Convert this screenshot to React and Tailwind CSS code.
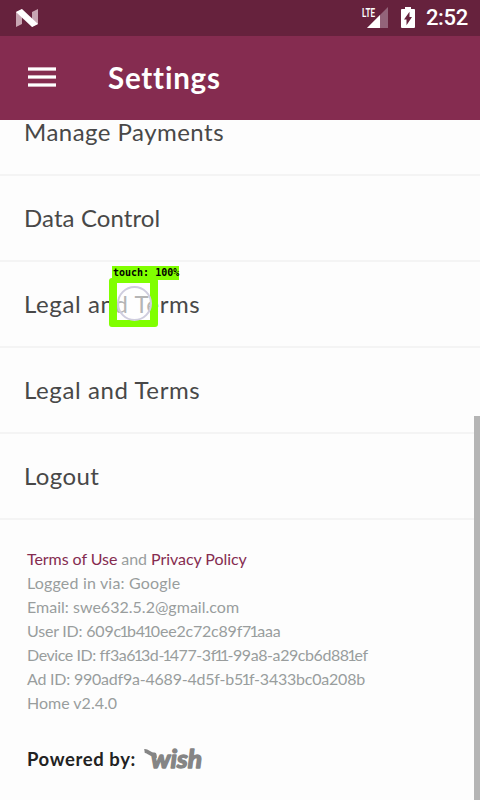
import { Fragment } from "react";

const menuItems = [
  { label: "Manage Payments", tracking: "tracking-[0.47px]" },
  { label: "Data Control", tracking: "tracking-[0.1px]" },
  { label: "Legal and Terms", tracking: "tracking-[0.6px]" },
  { label: "Legal and Terms", tracking: "tracking-[0.6px]" },
  { label: "Logout", tracking: "tracking-[0.4px]" },
];

const details = [
  { text: "Logged in via: Google", tracking: "tracking-[0.18px]" },
  { text: "Email: swe632.5.2@gmail.com", tracking: "tracking-[0.02px]" },
  { text: "User ID: 609c1b410ee2c72c89f71aaa", tracking: "tracking-[-0.2px]" },
  { text: "Device ID: ff3a613d-1477-3f11-99a8-a29cb6d881ef", tracking: "tracking-[-0.42px]" },
  { text: "Ad ID: 990adf9a-4689-4d5f-b51f-3433bc0a208b", tracking: "tracking-[-0.22px]" },
  { text: "Home v2.4.0", tracking: "tracking-[0px]" },
];

// Tightens the space round each digit one, which is set tabular by default.
function NarrowOnes({ text }) {
  return text.split("1").map((part, i) => (
    <Fragment key={i}>
      {i > 0 && <span className="-mx-[1.55px]">1</span>}
      {part}
    </Fragment>
  ));
}

function StatusBar() {
  return (
    <div className="flex h-9 shrink-0 items-center bg-[#66223d] pl-4 pr-3 text-white">
      <svg width="22" height="18" viewBox="0 0 22 18">
        <path d="M0 3L6 0V15L0 18Z" fill="#c7a5b2" />
        <path d="M16 3L22 0V15L16 18Z" fill="#c7a5b2" />
        <path d="M0 3L6 0L22 15L16 18Z" fill="#fff" />
      </svg>
      <svg className="ml-auto overflow-visible" width="28" height="24" viewBox="0 0 28 24">
        <path d="M6 22L27 1V22Z" fill="#93647a" />
        <path d="M0 0H14.5V12H0Z" fill="#66223d" />
        <path d="M6 22L19 9V22Z" fill="#fff" />
        <text x="1" y="11" fill="#fff" fontFamily="Roboto, sans-serif" fontWeight="600" fontSize="13.5" textLength="13" lengthAdjust="spacingAndGlyphs">LTE</text>
      </svg>
      <svg className="-mt-[2px] ml-3 mr-[11px]" width="14" height="21" viewBox="0 0 14 22" preserveAspectRatio="none">
        <path d="M4 0H10V2H13Q14 2 14 3V21Q14 22 13 22H1Q0 22 0 21V3Q0 2 1 2H4Z" fill="#fff" />
        <path d="M8.5 5V10.5H11L5.5 19V13H3Z" fill="#66223d" />
      </svg>
      <span className="font-[Roboto,sans-serif] text-[22px] font-medium leading-9 tracking-[-0.3px]">2:52</span>
    </div>
  );
}

function TouchMarker() {
  return (
    <div className="absolute left-[109px] top-[4px]">
      <div className="ml-[3px] h-[14px] w-[67px] whitespace-nowrap bg-[#80ff00] pl-px font-['DejaVu_Sans_Mono','Liberation_Mono',monospace] text-[10px] font-bold leading-[13px] text-black">touch: 100%</div>
      <div className="-mt-[2px] flex h-[49px] w-[49px] items-center justify-center rounded-[3px] border-x-8 border-b-[7px] border-t-[5px] border-[#80ff00] bg-white/60 pl-[2px] pt-[3px]">
        <div className="h-[35px] w-[35px] shrink-0 rounded-full border-2 border-[#cfcdde]" />
      </div>
    </div>
  );
}

function WishLogo() {
  return (
    <svg className="ml-2 overflow-visible" width="60" height="22" viewBox="0 0 60 22" role="img">
      <path d="M0.5 3C4 2.5 6 7 10.5 6.5L11 10" fill="none" stroke="#858585" strokeWidth="4" strokeLinejoin="round" />
      <text x="7" y="19.5" fill="#858585" stroke="#858585" strokeWidth="1.4" strokeLinejoin="round" fontFamily="Lato, sans-serif" fontWeight="700" fontStyle="italic" fontSize="25.5" textLength="51" lengthAdjust="spacingAndGlyphs">wish</text>
    </svg>
  );
}

export default function App() {
  return (
    <div className="relative flex h-[800px] w-[480px] flex-col overflow-hidden bg-[#fdfdfd] font-[Lato,sans-serif]">
      <StatusBar />
      <header className="z-10 flex h-[84px] shrink-0 items-center bg-[#852c50] pl-7">
        <div className="-mt-[2px] flex w-7 flex-col gap-1">
          <i className="h-1 border-y border-[#d3b0be] bg-white" />
          <i className="h-1 border-y border-[#d3b0be] bg-white" />
          <i className="h-1 border-y border-[#d3b0be] bg-white" />
        </div>
        <h1 className="ml-[52px] text-[29.5px] font-bold tracking-[0.8px] text-white [font-variant-ligatures:none]">Settings</h1>
      </header>
      <main className="-mt-[30px]">
        {menuItems.map((item, i) => (
          <div key={i} className="relative flex h-[86px] items-center border-b-2 border-[#f4f4f4] pl-6 text-[24px] text-[#484848]">
            <span className={item.tracking}>{item.label}</span>
            {i === 2 && <TouchMarker />}
          </div>
        ))}
      </main>
      <footer className="pl-[27px] pt-[27px] text-[16px] leading-6 text-[#999d9d]">
        <p className="tracking-[-0.06px]">
          <span className="text-[#852c50]">Terms of Use</span> and <span className="text-[#852c50]">Privacy Policy</span>
        </p>
        {details.map((line) => (
          <p key={line.text} className={line.tracking}>
            <NarrowOnes text={line.text} />
          </p>
        ))}
        <div className="mt-[32px] flex h-6 items-center text-[18.5px] font-bold text-[#222]">
          <span className="w-[109px] whitespace-nowrap tracking-[0.6px]">Powered by:</span>
          <WishLogo />
        </div>
      </footer>
      <div className="absolute bottom-0 right-0 h-96 w-1.5 bg-[#b5b5b5]" />
    </div>
  );
}
